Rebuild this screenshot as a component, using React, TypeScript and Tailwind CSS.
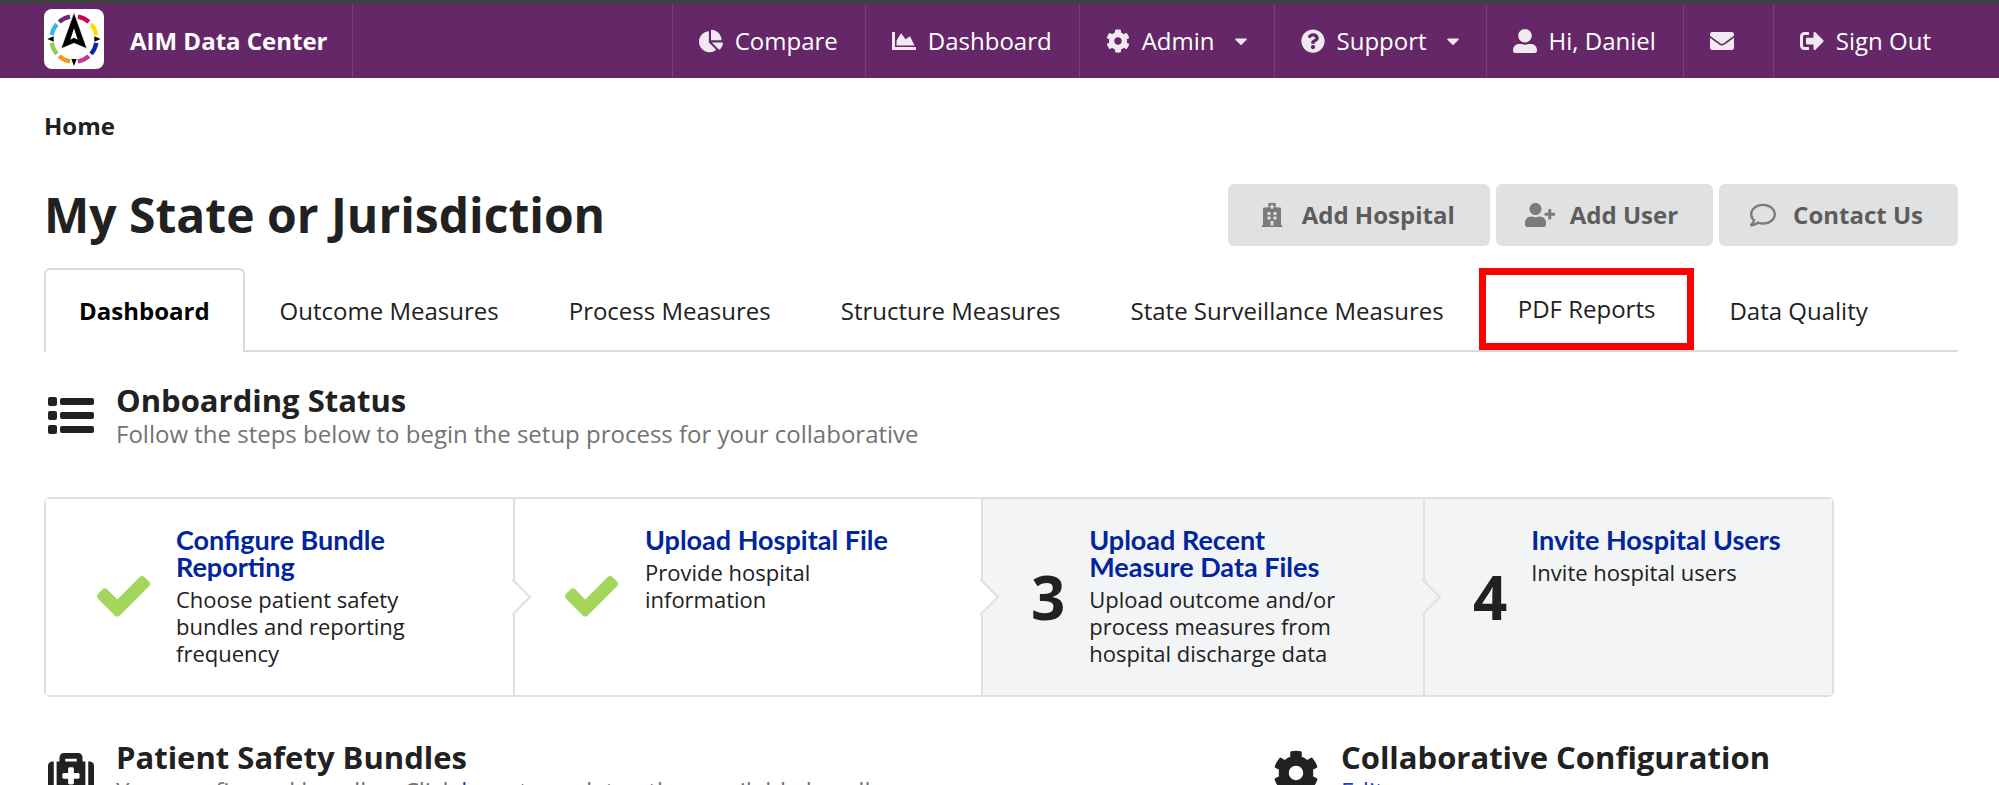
import React from 'react';
import { IconType } from 'react-icons';
import {
  FaCaretDown,
  FaChartArea,
  FaChartPie,
  FaCog,
  FaEnvelope,
  FaHospital,
  FaMedkit,
  FaQuestionCircle,
  FaRegComment,
  FaSignOutAlt,
  FaUserAlt,
  FaUserPlus,
} from 'react-icons/fa';

interface NavEntry {
  icon: IconType;
  label?: string;
  title?: string;
  dropdown?: boolean;
}

interface Step {
  title: string;
  description: string;
  done?: boolean;
}

const navEntries: NavEntry[] = [
  { icon: FaChartPie, label: 'Compare' },
  { icon: FaChartArea, label: 'Dashboard' },
  { icon: FaCog, label: 'Admin', dropdown: true },
  { icon: FaQuestionCircle, label: 'Support', dropdown: true },
  { icon: FaUserAlt, label: 'Hi, Daniel' },
  { icon: FaEnvelope, title: 'Messages' },
  { icon: FaSignOutAlt, label: 'Sign Out' },
];

const actions = [
  { icon: FaHospital, label: 'Add Hospital', size: 'text-2xl' },
  { icon: FaUserPlus, label: 'Add User', size: 'text-[30px]' },
  { icon: FaRegComment, label: 'Contact Us', size: 'text-[26px]' },
];

const tabs = [
  'Dashboard',
  'Outcome Measures',
  'Process Measures',
  'Structure Measures',
  'State Surveillance Measures',
  'PDF Reports',
  'Data Quality',
];

const steps: Step[] = [
  {
    title: 'Configure Bundle Reporting',
    description: 'Choose patient safety bundles and reporting frequency',
    done: true,
  },
  { title: 'Upload Hospital File', description: 'Provide hospital information', done: true },
  {
    title: 'Upload Recent Measure Data Files',
    description: 'Upload outcome and/or process measures from hospital discharge data',
  },
  { title: 'Invite Hospital Users', description: 'Invite hospital users' },
];

// Ring colours, clockwise from the top
const ringColors = ['#d6004f', '#ffdd00', '#0a2a9c', '#c9349c', '#f7941d', '#8fd14f', '#3fb4e5', '#6b2a7b'];

const ringPoint = (deg: number) => {
  const rad = (deg * Math.PI) / 180;
  return `${90 + 68 * Math.sin(rad)} ${90 - 68 * Math.cos(rad)}`;
};

const Logo = () => (
  <svg viewBox="0 0 180 180" className="size-[60px] shrink-0" role="img" aria-label="AIM">
    <rect width="180" height="180" rx="24" fill="#fff" />
    {ringColors.map((color, i) => {
      const start = i * 45 + (i % 2 === 0 ? 10 : 4);
      return (
        <path
          key={color}
          d={`M${ringPoint(start)}A68 68 0 0 1 ${ringPoint(start + 31)}`}
          fill="none"
          stroke={color}
          strokeWidth="13"
        />
      );
    })}
    <path d="M90 10 129 119 90 103 51 119Z" fill="#000" stroke="#fff" strokeWidth="2" />
    <path d="M90 58 101 92 90 86 79 92Z" fill="#fff" />
    <path d="M10 90 29 82V98ZM170 90 151 82V98ZM90 171 82 150H98Z" fill="#000" />
  </svg>
);

const CheckIcon = () => (
  <svg viewBox="121 334 1550 1188" className="w-[53px]" fill="currentColor" aria-hidden="true">
    <path d="M1671 566q0 40-28 68l-724 724-136 136q-28 28-68 28t-68-28l-136-136-362-362q-28-28-28-68t28-68l136-136q28-28 68-28t68 28l294 295 656-657q28-28 68-28t68 28l136 136q28 28 28 68z" />
  </svg>
);

const ListIcon = () => (
  <svg viewBox="0 0 46 38" className="w-[46px]" fill="currentColor" aria-hidden="true">
    {[0, 14, 28].map((y) => (
      <React.Fragment key={y}>
        <rect y={y} width="9" height="9" rx="2" />
        <rect x="12" y={y + 1} width="34" height="7" rx="2" />
      </React.Fragment>
    ))}
  </svg>
);

const NavItem: React.FC<NavEntry> = ({ icon: Icon, label, title, dropdown }) => (
  <a
    href="#"
    aria-label={title}
    className="flex items-center gap-[10px] border-l border-[#75407a] pl-6 pr-[27px]"
  >
    <span className="flex w-7 justify-center text-white/90">
      <Icon />
    </span>
    <span>{label}</span>
    {dropdown && <FaCaretDown className="ml-[6px] -mr-1 text-xl text-white/90" />}
  </a>
);

interface SectionHeaderProps {
  icon: React.ReactNode;
  title: string;
  children: React.ReactNode;
}

const SectionHeader: React.FC<SectionHeaderProps> = ({ icon, title, children }) => (
  <div className="flex items-center gap-[18px]">
    <span className="flex w-[54px] shrink-0 justify-center text-[46px]">{icon}</span>
    <div>
      <h2 className="text-[31px] leading-9 font-bold">{title}</h2>
      <p className="text-2xl leading-8 text-[#737373]">{children}</p>
    </div>
  </div>
);

export default function App() {
  return (
    <div className="h-screen overflow-hidden bg-white font-['Open_Sans',sans-serif] text-2xl text-[#212121]">
      <header className="flex h-[78px] border-t-4 border-[#414042] bg-[#652767] pl-11 pr-[41px] text-white">
        <a href="#" className="flex items-center gap-[26px] border-r border-[#75407a] pr-6 font-bold">
          <span className="pb-1">
            <Logo />
          </span>
          AIM Data Center
        </a>
        <nav className="ml-auto flex">
          {navEntries.map((entry) => (
            <NavItem key={entry.label ?? entry.title} {...entry} />
          ))}
        </nav>
      </header>

      <main className="pl-11 pr-[41px]">
        <div className="pt-8 font-bold">Home</div>

        <div className="mt-[42px] flex items-center justify-between">
          <h1 className="text-[48px] leading-[62px] font-bold">My State or Jurisdiction</h1>
          <div className="flex gap-[6px]">
            {actions.map(({ icon: Icon, label, size }) => (
              <button
                key={label}
                type="button"
                className="flex h-[62px] items-center gap-4 rounded-md bg-[#e0e1e2] pl-[30px] pr-[35px] font-bold text-[#5c5c5c]"
              >
                <span className={`flex w-7 justify-center text-[#7b7b7b] ${size}`}>
                  <Icon className="shrink-0" />
                </span>
                {label}
              </button>
            ))}
          </div>
        </div>

        {/* Tabs */}
        <div className="mt-[22px] flex h-[84px] border-b-2 border-[#d9dadb]">
          {tabs.map((tab) => {
            let style = 'px-[35px] pt-1';
            if (tab === 'Dashboard') {
              style = '-mb-[2px] rounded-t-md border-2 border-b-0 border-[#d9dadb] bg-white px-[33px] font-bold text-black';
            } else if (tab === 'PDF Reports') {
              style = 'border-[7px] border-[#ff0000] px-[32px]';
            }
            return (
              <a key={tab} href="#" className={`flex items-center ${style}`}>
                {tab}
              </a>
            );
          })}
        </div>

        <div className="mt-[30px]">
          <SectionHeader icon={<ListIcon />} title="Onboarding Status">
            Follow the steps below to begin the setup process for your collaborative
          </SectionHeader>
        </div>

        {/* Onboarding steps */}
        <ol className="mt-[47px] grid max-w-[1790px] grid-cols-[470fr_469fr_443fr_408fr] rounded-md border-2 border-[#dfe0e1]">
          {steps.map((step, i) => (
            <li
              key={step.title}
              className={`relative flex pt-[27px] pb-7 pl-12 ${step.done ? 'bg-white' : 'bg-[#f3f4f5]'} ${
                i < steps.length - 1 ? 'border-r-2 border-[#dfe0e1]' : ''
              }`}
            >
              <span className="mr-6 flex shrink-0 items-center">
                {step.done ? (
                  <span className="flex w-[58px] justify-center text-[#a5d65c]">
                    <CheckIcon />
                  </span>
                ) : (
                  <span className="text-[60px] leading-none font-bold">{i + 1}</span>
                )}
              </span>
              <div className="max-w-[262px]">
                <a href="#" className="block font-['Lato',sans-serif] text-[27px] leading-[27px] font-bold text-[#00259e]">
                  {step.title}
                </a>
                <p className="mt-[6px] text-[22px] leading-[27px]">{step.description}</p>
              </div>
              {i < steps.length - 1 && (
                <span
                  className={`absolute top-1/2 right-0 z-10 size-[26px] translate-x-1/2 -translate-y-1/2 rotate-45 border-t-2 border-r-2 border-[#dfe0e1] ${
                    step.done ? 'bg-white' : 'bg-[#f3f4f5]'
                  }`}
                />
              )}
            </li>
          ))}
        </ol>

        <div className="mt-[42px] grid grid-cols-[64fr_36fr]">
          <SectionHeader icon={<FaMedkit />} title="Patient Safety Bundles">
            Your configured bundles. Click{' '}
            <a href="#" className="text-[#1a3fc4]">
              here
            </a>{' '}
            to update other available bundles
          </SectionHeader>
          <SectionHeader icon={<FaCog />} title="Collaborative Configuration">
            <a href="#" className="text-[#1a3fc4]">
              Edit
            </a>
          </SectionHeader>
        </div>
      </main>
    </div>
  );
}
